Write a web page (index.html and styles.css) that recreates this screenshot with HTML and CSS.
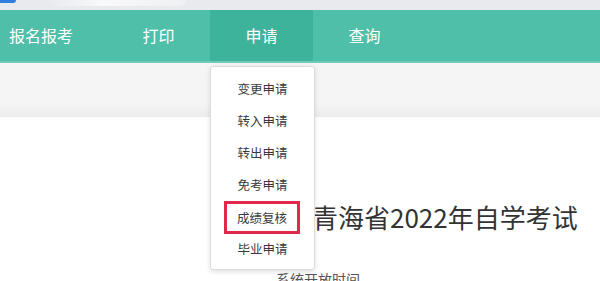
FILE: index.html
```html
<!DOCTYPE html>
<html lang="zh-CN">
<head>
<meta charset="utf-8">
<title>青海省自学考试</title>
<link rel="stylesheet" href="styles.css">
</head>
<body>
<div class="topstrip"><span class="pill"></span><span class="ghost"></span></div>
<nav class="nav">
  <div class="nav-item first">报名报考</div>
  <div class="nav-item">打印</div>
  <div class="nav-item active">申请
    <ul class="dropdown">
      <li>变更申请</li>
      <li>转入申请</li>
      <li>转出申请</li>
      <li>免考申请</li>
      <li class="marked"><span class="mark">成绩复核</span></li>
      <li>毕业申请</li>
    </ul>
  </div>
  <div class="nav-item">查询</div>
</nav>
<div class="banner"></div>
<main class="main">
  <h1 class="title">青海省2022年自学考试</h1>
  <p class="sub">系统开放时间</p>
</main>
</body>
</html>
```

FILE: styles.css
```css
* { box-sizing: border-box; }
html, body { margin: 0; padding: 0; }
body {
  font-family: "Noto Sans CJK SC", "Noto Sans", sans-serif;
  background: #fff;
  width: 600px;
  height: 281px;
  overflow: hidden;
}
.topstrip {
  height: 10px;
  background: #e9eaee;
  display: flex;
  align-items: flex-start;
}
.pill {
  width: 16px;
  height: 3px;
  background: #2f7fe0;
  border-radius: 0 0 3px 0;
}
.ghost {
  margin-left: 30px;
  width: 140px;
  height: 6px;
  background: linear-gradient(90deg, rgba(255,255,255,0) 0%, rgba(255,255,255,0.7) 40%, rgba(255,255,255,0.3) 100%);
  border-radius: 0 0 6px 6px;
}
.nav {
  height: 53px;
  background: #4fbfa9;
  border-bottom: 2px solid #6fcbb8;
  display: flex;
}
.nav-item {
  width: 103px;
  color: #fff;
  font-size: 16px;
  display: flex;
  align-items: center;
  justify-content: center;
  padding-bottom: 2px;
  position: relative;
}
.nav-item.first {
  width: 107px;
  justify-content: flex-start;
  padding-left: 9px;
}
.nav-item.active {
  background: #3db39b;
}
.dropdown {
  list-style: none;
  margin: 0;
  position: absolute;
  top: 56px;
  left: 0;
  width: 105px;
  padding: 6px 0 4px;
  background: #fff;
  border: 1px solid #dcdcdc;
  border-radius: 3px;
  box-shadow: 0 2px 5px rgba(0,0,0,0.12);
  z-index: 5;
}
.dropdown li {
  height: 32px;
  line-height: 32px;
  text-align: center;
  font-size: 12.5px;
  color: #3a3a3a;
}
.dropdown li.marked {
  display: flex;
  justify-content: center;
  align-items: center;
}
.mark {
  display: block;
  width: 76px;
  height: 33px;
  line-height: 27px;
  border: 3px solid #e0284b;
  margin-left: -1px;
}
.banner {
  height: 54px;
  background: linear-gradient(180deg, #f5f5f5 0%, #f5f5f5 74%, #ececec 100%);
}
.main {
  padding-left: 312px;
}
.title {
  margin: 82px 0 0;
  font-size: 26px;
  font-weight: normal;
  line-height: 36px;
  color: #333;
  white-space: nowrap;
}
.sub {
  margin: 34px 0 0 -36px;
  font-size: 14px;
  color: #555;
}
```
